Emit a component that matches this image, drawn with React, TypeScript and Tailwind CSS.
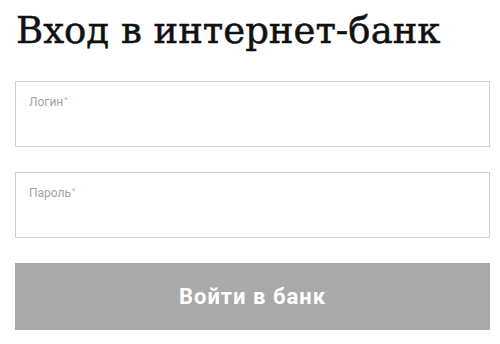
export default function App() {
  return (
    <div className="w-[500px] h-[344px] bg-white px-[15px] pt-[10px]" style={{ fontFamily: "Roboto, 'Liberation Sans', sans-serif" }}>
      <h1 className="text-[37px] leading-[42px] text-[#111] ml-[1px] [-webkit-text-stroke:0.5px_#111]" style={{ fontFamily: "'DejaVu Serif', 'Liberation Serif', serif" }}>
        Вход в интернет-банк
      </h1>

      <div className="mt-[29px] flex flex-col">
        <label className="block h-[66px] w-[475px] border border-[#cfcfcf] px-[13px] pt-[7px]">
          <span className="text-[12px] leading-[13px] text-[#a3a3a3]">
            Логин<sup className="text-[8px] text-[#e8a36a] ml-[1px]">*</sup>
          </span>
        </label>

        <label className="mt-[25px] block h-[66px] w-[475px] border border-[#cfcfcf] px-[13px] pt-[7px]">
          <span className="text-[12px] leading-[13px] text-[#a3a3a3]">
            Пароль<sup className="text-[8px] text-[#e8a36a] ml-[1px]">*</sup>
          </span>
        </label>

        <button className="mt-[25px] h-[67px] w-[475px] bg-[#a9a9a9] text-white text-[22px] tracking-[1px] font-bold">
          Войти в банк
        </button>
      </div>
    </div>
  );
}
